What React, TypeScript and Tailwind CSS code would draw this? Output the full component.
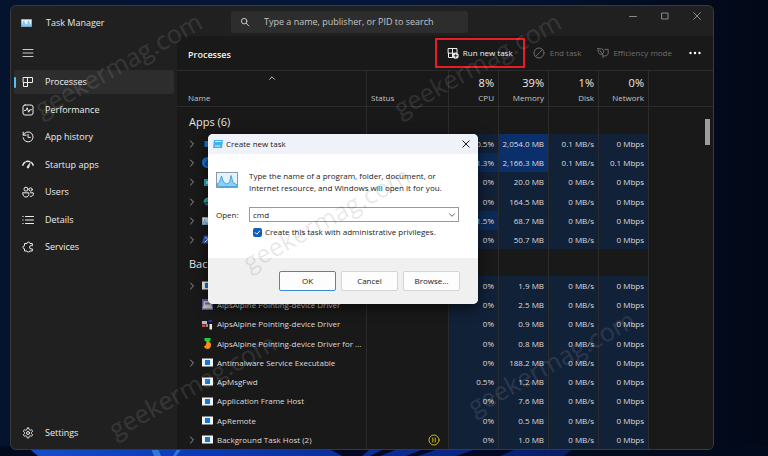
import React from "react";

type IconProps = { className?: string };

const stroke = {
  fill: "none",
  stroke: "currentColor",
  strokeLinecap: "round" as const,
  strokeLinejoin: "round" as const,
};

const MenuIcon = ({ className }: IconProps) => (
  <svg viewBox="0 0 12 12" className={className} {...stroke}>
    <path d="M1 2.500h10M1 6h10M1 9.500h10" />
  </svg>
);

const ProcessesIcon = ({ className }: IconProps) => (
  <svg viewBox="0 0 12 12" className={className} {...stroke}>
    <path d="M1.500 1.500h9v5h-9zM5.500 1.500v9M1.500 6.500v4h4" />
  </svg>
);

const PerformanceIcon = ({ className }: IconProps) => (
  <svg viewBox="0 0 12 12" className={className} {...stroke}>
    <rect x="1" y="1" width="10" height="10" rx="2" />
    <path d="M2.500 6.500h1.400l1.300-2.700 1.500 4.400 1.100-2.400h1.700" />
  </svg>
);

const HistoryIcon = ({ className }: IconProps) => (
  <svg viewBox="0 0 12 12" className={className} {...stroke}>
    <path d="M1.200 1.200v3h3M1.400 4a5 5 0 1 1-.3 2.800M6 3.400v3h2.300" />
  </svg>
);

const StartupIcon = ({ className }: IconProps) => (
  <svg viewBox="0 0 12 12" className={className} {...stroke}>
    <path d="M.8 6.200A5.600 5.600 0 0 1 3 3.200M4.400 2.500a5.600 5.600 0 0 1 3.400.1M9.400 3.500a5.600 5.600 0 0 1 1.800 2.700" strokeWidth="1.4" />
    <path d="M8.200 3.600 5.400 7.300a1 1 0 1 0 1.600 1z" fill="currentColor" strokeWidth=".5" />
  </svg>
);

const UsersIcon = ({ className }: IconProps) => (
  <svg viewBox="0 0 12 12" className={className} {...stroke}>
    <circle cx="4" cy="3.200" r="2" />
    <circle cx="8.700" cy="3.500" r="1.600" />
    <path d="M1 6.800h5.800v1.600c0 1.600-1.200 2.600-2.900 2.600S1 10 1 8.400zM8.300 6.800h3v1.400c0 1.500-1.300 2.500-3 2.200" />
  </svg>
);

const DetailsIcon = ({ className }: IconProps) => (
  <svg viewBox="0 0 12 12" className={className} {...stroke}>
    <path d="M3.500 2.500h8M3.500 6h8M3.500 9.500h8M.8 2.500h.4M.8 6h.4M.8 9.500h.4" />
  </svg>
);

const ServicesIcon = ({ className }: IconProps) => (
  <svg viewBox="0 0 12 12" className={className} {...stroke}>
    <path d="M10.300 4.500V2.500H8a1.500 1.500 0 0 0-3 0H2.500v2.300a1.500 1.500 0 0 0 0 3V10h2.400a1.500 1.500 0 0 0 2.900 0h2.500V7.900H9.200a1.700 1.700 0 0 1 0-3.400z" />
  </svg>
);

const SettingsIcon = ({ className }: IconProps) => (
  <svg viewBox="0 0 24 24" className={className} {...stroke} strokeWidth="2">
    <path d="M12.220 2h-.44a2 2 0 0 0-2 2v.18a2 2 0 0 1-1 1.730l-.43.25a2 2 0 0 1-2 0l-.15-.08a2 2 0 0 0-2.730.73l-.22.38a2 2 0 0 0 .73 2.730l.15.1a2 2 0 0 1 1 1.720v.51a2 2 0 0 1-1 1.740l-.15.09a2 2 0 0 0-.73 2.730l.22.38a2 2 0 0 0 2.730.73l.15-.08a2 2 0 0 1 2 0l.43.25a2 2 0 0 1 1 1.730V20a2 2 0 0 0 2 2h.44a2 2 0 0 0 2-2v-.18a2 2 0 0 1 1-1.730l.43-.25a2 2 0 0 1 2 0l.15.08a2 2 0 0 0 2.730-.73l.22-.39a2 2 0 0 0-.73-2.730l-.15-.08a2 2 0 0 1-1-1.740v-.5a2 2 0 0 1 1-1.740l.15-.09a2 2 0 0 0 .73-2.730l-.22-.38a2 2 0 0 0-2.730-.73l-.15.08a2 2 0 0 1-2 0l-.43-.25a2 2 0 0 1-1-1.730V4a2 2 0 0 0-2-2z" />
    <circle cx="12" cy="12" r="3" />
  </svg>
);

const SearchIcon = ({ className }: IconProps) => (
  <svg viewBox="0 0 12 12" className={className} {...stroke} strokeWidth="1.2">
    <circle cx="5" cy="5" r="3.300" />
    <path d="m7.500 7.500 3 3.200" />
  </svg>
);

const RunIcon = ({ className }: IconProps) => (
  <svg viewBox="0 0 12 12" className={className} {...stroke}>
    <path d="M1.500 1.500h8.500v4.700H1.500zM5.500 1.500v9M1.500 6v4.500h4" />
    <circle cx="8.700" cy="8.700" r="3" fill="currentColor" stroke="none" />
    <path d="M7.200 8.700h3M8.700 7.200v3" stroke="#191919" strokeWidth=".8" />
  </svg>
);

const EndIcon = ({ className }: IconProps) => (
  <svg viewBox="0 0 12 12" className={className} {...stroke}>
    <circle cx="6" cy="6" r="5" />
    <path d="m2.600 9.400 6.800-6.800" />
  </svg>
);

const LeafIcon = ({ className }: IconProps) => (
  <svg viewBox="0 0 12 12" className={className} {...stroke}>
    <path d="M1 1.500c1.500.8 3.500-.4 5 1.100 1.500 1.500.4 4-.9 4.700C3 8 .6 6.500 1 1.500zM2.800 3.500 6 8v2.500M8 2.400h3.200v3.800c0 2.200-2.500 3-5.200 2.800" />
  </svg>
);

const Chevron = ({ className }: IconProps) => (
  <svg viewBox="0 0 8 8" className={className} {...stroke}>
    <path d="m2.500 1 3 3-3 3" />
  </svg>
);

/* The blue area chart used as the application's own icon */
const GraphIcon = ({ className }: IconProps) => (
  <svg viewBox="0 0 22 16" preserveAspectRatio="none" className={className}>
    <rect x=".5" y=".5" width="21" height="15" fill="#e3f3fc" stroke="#8b9aa5" />
    <path d="M1.500 14.500v-3l2-1.500L5.500 4l2 6 3 2 3-1.500 1.500-7 2 7 3.500 2v2z" fill="#8ecff5" stroke="#2f94d6" strokeWidth=".8" />
  </svg>
);

type IconKind = "ps" | "edge" | "teal" | "green" | "graph" | "bolt" | "exe" | "pad" | "dots" | "carrot";

const AppIcon = ({ kind }: { kind: IconKind }) => {
  if (kind === "graph") return <GraphIcon className="h-2 w-[11px] shrink-0" />;
  return (
    <svg viewBox="0 0 11 11" className="size-[11px] shrink-0">
      {kind === "exe" && (
        <>
          <rect y="1.500" width="11" height="8" fill="#f2f2f2" />
          <rect x="3" y="3" width="5" height="5" fill="#1479d3" />
        </>
      )}
      {kind === "ps" && <path d="M2.500 3h8v6h-8z" fill="#1479d3" />}
      {kind === "edge" && (
        <>
          <circle cx="5.500" cy="5.500" r="5.500" fill="#0f78d8" />
          <path d="M3 8a4 4 0 0 1 5-4.500c-2.500.4-3.500 3-2 5.500z" fill="#0a3f86" />
        </>
      )}
      {kind === "teal" && (
        <>
          <rect x="2" y="2" width="9" height="7" fill="#2aa9bd" />
          <rect x="4" y="4" width="5" height="3" fill="#8fe3ea" />
        </>
      )}
      {kind === "green" && (
        <>
          <path d="M1.500 6.500a4.500 4.500 0 0 1 9-1z" fill="#2fae8c" />
          <path d="M2 6.500h6v3.500a5 5 0 0 1-6-3.500z" fill="#1467b8" />
        </>
      )}
      {kind === "bolt" && (
        <>
          <path d="M2 1.500h9l-2 8H0z" fill="#3059c9" />
          <path d="m3.500 3 2.500 2.500-3.500 2.700" stroke="#fff" fill="none" />
        </>
      )}
      {kind === "pad" && (
        <>
          <rect width="11" height="11" fill="#5c5c9a" />
          <path d="M1.500 2h8v4l1 3.500h-10l1-3.500z" fill="#c9c9c9" />
          <path d="M3 3.500h5v2H3z" fill="#777" />
        </>
      )}
      {kind === "dots" && (
        <>
          <path d="M0 2h5v3H0z" fill="#bbb" />
          <path d="M0 5.500h3.500V8H0z" fill="#d94848" />
          <path d="M4 5h2v3H4z" fill="#888" />
          <path d="M6.500 1H10v2H6.500z" fill="#2d2dc8" />
          <path d="M7.500 5h2.500v5.500H7.500z" fill="#e8e8e8" />
        </>
      )}
      {kind === "carrot" && (
        <>
          <path d="M2.500 0h6v2.500L6.500 4h-2l-2-1.500z" fill="#18d42c" />
          <path d="M5 3.500h2l1 1C9 5.300 9 6 9 7c0 2.500-1.500 4-3.500 4S2 9.500 2 8c1 0 2-.6 2-2z" fill="#f58a1f" />
        </>
      )}
    </svg>
  );
};

type Heat = 0 | 1 | 2;
type Row = {
  name: string;
  icon: IconKind;
  open?: boolean;
  paused?: boolean;
  cpu: string;
  mem: string;
  disk: string;
  net: string;
  cpuHeat?: Heat;
  memHeat?: Heat;
};

const heat = ["bg-[#112138]", "bg-[#0c2a58]", "bg-[#0b2f6a]"];

const idle = { disk: "0 MB/s", net: "0 Mbps", cpu: "0%" };

const groups: { title: string; rows: Row[] }[] = [
  {
    title: "Apps (6)",
    rows: [
      { ...idle, name: "", icon: "ps", open: true, cpu: "0.5%", mem: "2,054.0 MB", disk: "0.1 MB/s", memHeat: 2 },
      { ...idle, name: "", icon: "edge", open: true, cpu: "1.3%", mem: "2,166.3 MB", disk: "0.1 MB/s", net: "0.1 Mbps", cpuHeat: 1, memHeat: 2 },
      { ...idle, name: "", icon: "teal", open: true, mem: "20.0 MB" },
      { ...idle, name: "", icon: "green", open: true, mem: "164.5 MB" },
      { ...idle, name: "", icon: "graph", open: true, cpu: "1.5%", mem: "68.7 MB", cpuHeat: 1 },
      { ...idle, name: "", icon: "bolt", open: true, mem: "50.7 MB" },
    ],
  },
  {
    title: "Background",
    rows: [
      { ...idle, name: "", icon: "exe", open: true, mem: "1.9 MB" },
      { ...idle, name: "AlpsAlpine Pointing-device Driver", icon: "pad", mem: "2.5 MB" },
      { ...idle, name: "AlpsAlpine Pointing-device Driver", icon: "dots", mem: "0.9 MB" },
      { ...idle, name: "AlpsAlpine Pointing-device Driver for ...", icon: "carrot", mem: "0.8 MB" },
      { ...idle, name: "Antimalware Service Executable", icon: "exe", open: true, mem: "188.2 MB" },
      { ...idle, name: "ApMsgFwd", icon: "exe", cpu: "0.5%", mem: "1.2 MB" },
      { ...idle, name: "Application Frame Host", icon: "exe", mem: "7.6 MB" },
      { ...idle, name: "ApRemote", icon: "exe", mem: "0.5 MB" },
      { ...idle, name: "Background Task Host (2)", icon: "exe", open: true, paused: true, mem: "1.0 MB" },
    ],
  },
];

const totals = [
  ["8%", "CPU"],
  ["39%", "Memory"],
  ["1%", "Disk"],
  ["0%", "Network"],
];

const nav = [
  { label: "Processes", Icon: ProcessesIcon },
  { label: "Performance", Icon: PerformanceIcon },
  { label: "App history", Icon: HistoryIcon },
  { label: "Startup apps", Icon: StartupIcon },
  { label: "Users", Icon: UsersIcon },
  { label: "Details", Icon: DetailsIcon },
  { label: "Services", Icon: ServicesIcon },
];

const line = "border-r border-[#2b2b2b]";

const Watermark = ({ className }: IconProps) => (
  <span
    aria-hidden="true"
    className={`pointer-events-none absolute -translate-x-1/2 -translate-y-1/2 -rotate-[29deg] text-[25px] leading-6 ${className}`}
  >
    geekermag.com
  </span>
);

function TitleBar() {
  return (
    <header className="flex h-[30px] text-[9px] text-[#e6e6e6]">
      <div className="flex w-[220px] items-center gap-[14px] pb-[1px] pl-[10px] pt-1">
        <GraphIcon className="h-2 w-[11px]" />
        <h1>Task Manager</h1>
      </div>
      <label className="mt-[5px] flex h-[22px] w-[237px] items-center gap-[14px] rounded-[3px] bg-[#2d2d2d] pl-[9px]">
        <SearchIcon className="size-[10px] text-[#c8c8c8]" />
        <input
          type="search"
          aria-label="Search"
          placeholder="Type a name, publisher, or PID to search"
          className="min-w-0 flex-1 bg-transparent outline-none placeholder:text-[#c4c4c4]"
        />
      </label>
      <div className="ml-auto flex h-5 items-center gap-6 pr-3 text-[#8a8a8a]">
        <button aria-label="Minimize">
          <svg viewBox="0 0 8 8" className="size-2" {...stroke}><path d="M.5 4.500h7" /></svg>
        </button>
        <button aria-label="Maximize">
          <svg viewBox="0 0 8 8" className="size-2" {...stroke}><path d="M1 1h6v6H1z" /></svg>
        </button>
        <button aria-label="Close">
          <svg viewBox="0 0 8 8" className="size-2" {...stroke}><path d="m.5.5 7 7M7.500.5l-7 7" /></svg>
        </button>
      </div>
    </header>
  );
}

function Sidebar() {
  return (
    <nav className="flex w-[166px] shrink-0 flex-col px-[3px] pb-1 text-[9px] text-[#ededed]">
      <button aria-label="Menu" className="flex h-[34px] items-center pl-2 text-[#c8c8c8]">
        <MenuIcon className="size-3" />
      </button>
      <ul className="flex h-[189px] flex-col justify-between">
        {nav.map(({ label, Icon }, i) => (
          <li key={label}>
            <a
              href="#"
              className={`relative flex h-6 items-center gap-[11px] rounded-[3px] pl-2 ${i === 0 ? "bg-[#2d2d2d]" : ""}`}
            >
              {i === 0 && <span className="absolute left-0 h-[11px] w-[2px] rounded-full bg-[#4cc2ff]" />}
              <Icon className="size-3" />
              {label}
            </a>
          </li>
        ))}
      </ul>
      <a href="#" className="mt-auto flex h-6 items-center gap-[11px] pl-2">
        <SettingsIcon className="size-3" />
        Settings
      </a>
    </nav>
  );
}

function Toolbar() {
  return (
    <div className="flex h-[35px] items-center border-b border-[#2b2b2b] pl-[11px] pr-3 text-[8px] text-[#6e6e6e]">
      <h2 className="pt-1 text-[9px] font-semibold text-[#f0f0f0]">Processes</h2>
      <button className="ml-auto flex h-[30px] w-[90px] items-center justify-center gap-1 whitespace-nowrap border-2 border-[#e81c24] text-[#ededed]">
        <RunIcon className="size-3" />
        Run new task
      </button>
      <button disabled className="ml-2 flex items-center gap-[5px] whitespace-nowrap">
        <EndIcon className="size-3" />
        End task
      </button>
      <button disabled className="ml-4 flex items-center gap-1 whitespace-nowrap">
        <LeafIcon className="size-3" />
        Efficiency mode
      </button>
      <button aria-label="More options" className="ml-[17px] text-white">
        <svg viewBox="0 0 12 4" className="h-1 w-3" fill="currentColor">
          <circle cx="1.500" cy="2" r="1.200" />
          <circle cx="6" cy="2" r="1.200" />
          <circle cx="10.500" cy="2" r="1.200" />
        </svg>
      </button>
    </div>
  );
}

function ProcessTable() {
  return (
    <table className="w-full table-fixed border-separate border-spacing-0 text-[8px] leading-3 text-[#dcdcdc]">
      <colgroup>
        <col className="w-[190px]" />
        <col className="w-[82px]" />
        <col className="w-[50px]" />
        <col className="w-[50px]" />
        <col className="w-[50px]" />
        <col className="w-[50px]" />
        <col />
      </colgroup>
      <thead>
        <tr className="h-9 text-left align-bottom text-[#c4c4c4] *:border-b *:border-[#2b2b2b] *:p-0 *:pb-[2px] *:font-normal">
          <th className={line}>
            <svg viewBox="0 0 8 4" className="mx-auto mb-3 h-1 w-2" {...stroke}><path d="m1.500 3.300 2.500-2.500 2.500 2.500" /></svg>
            <span className="block pl-[11px]">Name</span>
          </th>
          <th className={line}><span className="pl-1">Status</span></th>
          {totals.map(([value, label]) => (
            <th key={label} className={line}>
              <span className="block pr-1 text-right text-[11px] leading-[18px] text-[#ededed]">{value}</span>
              <span className="block pr-1 text-right">{label}</span>
            </th>
          ))}
          <th aria-label="Spacer" />
        </tr>
      </thead>
      {groups.map((group) => (
        <tbody key={group.title}>
          <tr className="h-[27px]">
            <th scope="rowgroup" className={`p-0 pl-3 pt-[2px] text-left text-[11px] font-normal text-[#e4e4e4] ${line}`}>{group.title}</th>
            <td className={line} />
            <td className={line} />
            <td className={line} />
            <td className={line} />
            <td className={line} />
            <td />
          </tr>
          {group.rows.map((row, i) => (
            <tr key={i} className="h-[19px] *:p-0 nth-[4n]:h-5">
              <td className={line}>
                <div className="flex items-center whitespace-nowrap pl-[11px]">
                  <span className="mr-[6px] flex size-2 shrink-0 text-[#9a9a9a]">{row.open && <Chevron className="size-2" />}</span>
                  <AppIcon kind={row.icon} />
                  <span className="ml-1">{row.name}</span>
                </div>
              </td>
              <td className={line}>
                {row.paused && (
                  <svg viewBox="0 0 12 12" className="ml-auto mr-2 size-3 text-[#c9b81c]" {...stroke}>
                    <circle cx="6" cy="6" r="5" />
                    <path d="M4.800 4v4M7.200 4v4" />
                  </svg>
                )}
              </td>
              <td className={`text-right ${line} ${heat[row.cpuHeat ?? 0]}`}><span className="pr-1">{row.cpu}</span></td>
              <td className={`whitespace-nowrap text-right ${line} ${heat[row.memHeat ?? 0]}`}><span className="pr-1">{row.mem}</span></td>
              <td className={`text-right ${line} ${heat[0]}`}><span className="pr-1">{row.disk}</span></td>
              <td className={`text-right ${line} ${heat[0]}`}><span className="pr-1">{row.net}</span></td>
              <td />
            </tr>
          ))}
        </tbody>
      ))}
    </table>
  );
}

function TaskDialog() {
  const button = "h-5 w-[57px] rounded-[2px] border bg-[#fdfdfd]";
  return (
    <div
      role="dialog"
      aria-labelledby="dialog-title"
      className="absolute left-[197px] top-[128px] w-[270px] overflow-hidden rounded-[5px] bg-white text-[8px] leading-3 text-[#1a1a1a] shadow-[0_4px_14px_rgba(0,0,0,0.6)]"
    >
      <div className="flex h-5 items-center gap-[3px] bg-[#f0f2f9] pl-[5px] pr-2">
        <svg viewBox="0 0 10 8" className="h-2 w-[10px]">
          <path d="M1 0h9L9 8H0z" fill="#3fb2ee" />
          <path d="M2.200 1.500h6.300M1.800 6h5.500" stroke="#d8f1fd" />
        </svg>
        <h2 id="dialog-title">Create new task</h2>
        <button aria-label="Close dialog" className="ml-auto">
          <svg viewBox="0 0 8 8" className="size-2" {...stroke}><path d="m.8.8 6.400 6.400M7.200.8.8 7.200" /></svg>
        </button>
      </div>
      <div className="grid h-[104px] grid-cols-[33px_1fr] content-start pl-2 pr-[19px] pt-4">
        <GraphIcon className="mt-[2px] h-4 w-[22px]" />
        <p className="h-[37px] whitespace-nowrap">
          Type the name of a program, folder, document, or
          <br />
          Internet resource, and Windows will open it for you.
        </p>
        <label htmlFor="open" className="self-center">Open:</label>
        <div className="relative w-[210px]">
          <select id="open" className="block h-[15px] w-full appearance-none border border-[#9a9a9a] bg-white pl-[3px]">
            <option>cmd</option>
          </select>
          <svg viewBox="0 0 8 8" className="pointer-events-none absolute right-[3px] top-1 size-2 text-[#666]" {...stroke}><path d="m1.500 2.800 2.500 2.500 2.500-2.500" /></svg>
        </div>
        <label className="col-start-2 mt-1 flex items-center gap-[3px] whitespace-nowrap pl-1">
          <span className="relative flex">
            <input type="checkbox" defaultChecked className="size-[9px] appearance-none rounded-[2px] bg-[#0f5fb8]" />
            <svg viewBox="0 0 9 9" className="pointer-events-none absolute inset-0 size-[9px] text-white" {...stroke}><path d="m2.200 4.600 1.600 1.600 3-3.200" /></svg>
          </span>
          Create this task with administrative privileges.
        </label>
      </div>
      <div className="flex h-[46px] items-start justify-end gap-[5px] bg-[#f0f0f0] pr-[18px] pt-[13px]">
        <button className={`${button} border-[#3a8bd6]`}>OK</button>
        <button className={`${button} border-[#d4d4d4]`}>Cancel</button>
        <button className={`${button} border-[#d4d4d4]`}>Browse...</button>
      </div>
      <Watermark className="left-[118px] top-[84px] text-black/10" />
    </div>
  );
}

export default function App() {
  return (
    <div className="relative flex min-h-screen flex-col overflow-hidden bg-gradient-to-r from-[#04142f] via-[#04173a] to-[#020817] pl-[10px] pr-[54px] pt-[5px] font-['Open_Sans','Noto_Sans',sans-serif]">
      <svg viewBox="0 0 768 10" preserveAspectRatio="none" aria-hidden="true" className="absolute bottom-0 left-0 h-[10px] w-full">
        <defs>
          <linearGradient id="bloom">
            <stop offset="0" stopColor="#1550c8" />
            <stop offset=".3" stopColor="#0b3ab8" />
            <stop offset=".7" stopColor="#0a2a90" />
            <stop offset="1" stopColor="#071c60" />
          </linearGradient>
        </defs>
        <rect x="0" width="768" height="10" fill="#020a1e" />
        <path d="M26 0h550l-12 10H38z" fill="url(#bloom)" />
        <path d="M150 0h7l4 10h-7zM184 0l-8 10h-3l6-10z" fill="#3a86e6" opacity=".8" />
        <path d="M324 0h50l-12 10h-20zM384 3h14l-18 7h-10zM424 3h14l-20 7h-12zM476 3h40l-16 7h-44z" fill="#020824" />
      </svg>
      <main className="relative overflow-hidden rounded-[6px] border border-[#3a3a3a] bg-[#202020]">
        <TitleBar />
        <div className="flex">
          <Sidebar />
          <section className="relative min-w-0 flex-1 rounded-tl-[5px] bg-[#191919]">
            <Toolbar />
            <ProcessTable />
            <span className="absolute right-[3px] top-[83px] h-[26px] w-[5px] bg-[#9d9d9d]" />
          </section>
        </div>
        <Watermark className="left-[107px] top-[58px] text-white/10" />
        <Watermark className="left-[466px] top-[58px] text-white/10" />
        <Watermark className="left-[181px] top-[379px] text-white/10" />
        <Watermark className="left-[540px] top-[356px] text-white/10" />
        <TaskDialog />
      </main>
    </div>
  );
}
